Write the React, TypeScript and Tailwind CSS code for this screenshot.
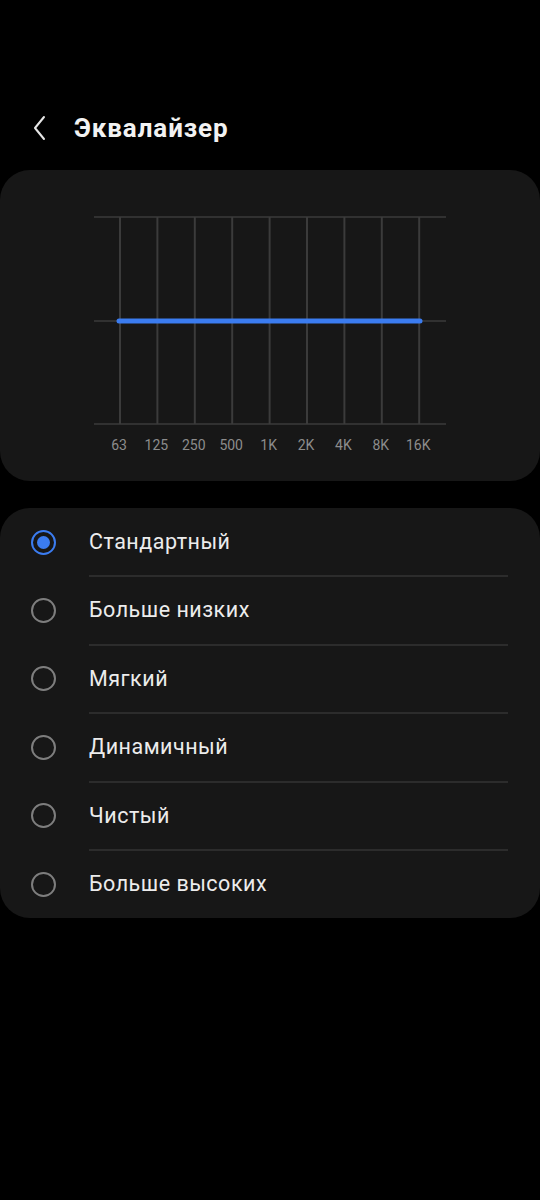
import React, { useState } from 'react';

const bands = ['63', '125', '250', '500', '1K', '2K', '4K', '8K', '16K'];
const presets = ['Стандартный', 'Больше низких', 'Мягкий', 'Динамичный', 'Чистый', 'Больше высоких'];

const xs = bands.map((_, i) => 120 + i * 37.4);

const EqChart: React.FC = () => (
  <svg width="540" height="210" viewBox="0 0 540 210" className="block">
    {[1, 105, 208].map(y => (
      <line key={y} x1="94" x2="446" y1={y} y2={y} stroke="#3b3b3b" strokeWidth="1.5" />
    ))}
    {xs.map(x => (
      <line key={x} x1={x} x2={x} y1="1" y2="208" stroke="#3b3b3b" strokeWidth="2" />
    ))}
    <line x1="119" x2="420" y1="105" y2="105" stroke="#3b7cf0" strokeWidth="5" strokeLinecap="round" />
  </svg>
);

const App: React.FC = () => {
  const [selected, setSelected] = useState(0);

  return (
    <div className="w-[540px] h-[1200px] overflow-hidden bg-black text-white pt-[98px]" style={{ fontFamily: 'Roboto, "Noto Sans", sans-serif' }}>
      {/* Header */}
      <div className="flex items-center h-[60px] pl-[30px]">
        <svg width="20" height="26" viewBox="0 0 20 26" className="mr-[24px]">
          <path d="M14 2 L5 13 L14 24" fill="none" stroke="#e6e6e6" strokeWidth="2" strokeLinecap="round" strokeLinejoin="round" />
        </svg>
        <h1 className="text-[26px] font-bold tracking-[0.9px] text-[#f2f2f2]">Эквалайзер</h1>
      </div>

      {/* Chart card */}
      <div className="mt-[12px] bg-[#171717] rounded-[30px] pt-[46px] pb-[27px]">
        <EqChart />
        <div className="relative h-[18px] mt-[10px]">
          {bands.map((b, i) => (
            <span
              key={b}
              className="absolute top-0 w-[40px] -ml-[20px] text-center text-[14px] leading-[18px] text-[#8c8c8c]"
              style={{ left: xs[i] - 1 }}
            >
              {b}
            </span>
          ))}
        </div>
      </div>

      {/* Presets */}
      <div className="mt-[27px] bg-[#171717] rounded-[30px]">
        {presets.map((p, i) => (
          <button
            key={p}
            onClick={() => setSelected(i)}
            className="w-full flex items-center h-[68.4px] text-left relative"
          >
            <span className="w-[89px] flex justify-center pr-[2px] shrink-0">
              {selected === i ? (
                <span className="w-[25px] h-[25px] rounded-full border-[2.5px] border-[#3b7cf0] flex items-center justify-center">
                  <span className="w-[13px] h-[13px] rounded-full bg-[#3b7cf0]" />
                </span>
              ) : (
                <span className="w-[25px] h-[25px] rounded-full border-2 border-[#7e7e7e]" />
              )}
            </span>
            <span className="text-[21.5px] tracking-[0.5px] text-[#ececec]">{p}</span>
            {i < presets.length - 1 && (
              <span className="absolute bottom-[-1px] left-[89px] right-[32px] h-[2px] bg-[#2c2c2c]" />
            )}
          </button>
        ))}
      </div>
    </div>
  );
};

export default App;
